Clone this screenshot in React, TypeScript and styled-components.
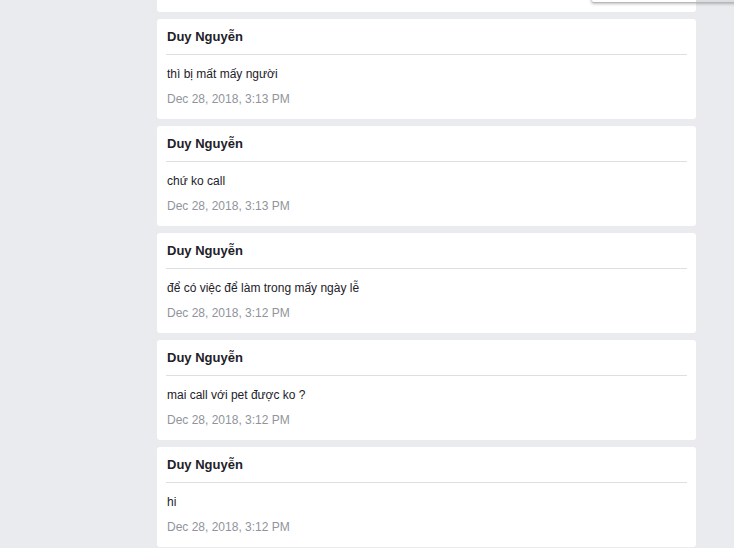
import React from "react";
import styled, { createGlobalStyle } from "styled-components";

const GlobalStyle = createGlobalStyle`
  html, body {
    margin: 0;
    padding: 0;
    background: #e9ebee;
    font-family: "Liberation Sans", Arial, Helvetica, sans-serif;
    overflow: hidden;
  }
  * { box-sizing: border-box; }
`;

const Page = styled.div`
  position: relative;
  width: 734px;
  height: 548px;
  overflow: hidden;
  background: #e9ebee;
`;

const Feed = styled.div`
  display: flex;
  flex-direction: column;
  gap: 7px;
  width: 539px;
  margin-left: 157px;
`;

const CardTail = styled.div`
  height: 12px;
  background: #ffffff;
  border-radius: 0 0 3px 3px;
`;

const Card = styled.div`
  background: #ffffff;
  border-radius: 3px;
  padding: 0 9px 12px;
  height: 100px;
`;

const Header = styled.div`
  padding: 10px 0 9px 1px;
  border-bottom: 1px solid #dddfe2;
  font-size: 13px;
  line-height: 16px;
  font-weight: bold;
  color: #1d2129;
`;

const Message = styled.div`
  padding: 11px 0 0 1px;
  font-size: 12px;
  line-height: 16px;
  color: #1d2129;
`;

const Time = styled.div`
  padding: 9px 0 0 1px;
  font-size: 12px;
  line-height: 16px;
  color: #90949c;
`;

const Popup = styled.div`
  position: absolute;
  top: -20px;
  left: 591px;
  right: -10px;
  height: 23px;
  border-left: 1px solid #d0d0d0;
  border-bottom: 1px solid #b8b8b8;
  border-bottom-left-radius: 3px;
  box-shadow: 0 1px 3px rgba(0, 0, 0, 0.25);
  background: linear-gradient(to right, #ffffff 0, #ffffff 104px, #dcdde0 104px);
`;

type Msg = { text: string; time: string };

const messages: Msg[] = [
  { text: "thì bị mất mấy người", time: "Dec 28, 2018, 3:13 PM" },
  { text: "chứ ko call", time: "Dec 28, 2018, 3:13 PM" },
  { text: "để có việc để làm trong mấy ngày lễ", time: "Dec 28, 2018, 3:12 PM" },
  { text: "mai call với pet được ko ?", time: "Dec 28, 2018, 3:12 PM" },
  { text: "hi", time: "Dec 28, 2018, 3:12 PM" },
];

export default function App() {
  return (
    <>
      <GlobalStyle />
      <Page>
        <Feed>
          <CardTail />
          {messages.map((m, i) => (
            <Card key={i}>
              <Header>Duy Nguyễn</Header>
              <Message>{m.text}</Message>
              <Time>{m.time}</Time>
            </Card>
          ))}
        </Feed>
        <Popup />
      </Page>
    </>
  );
}
